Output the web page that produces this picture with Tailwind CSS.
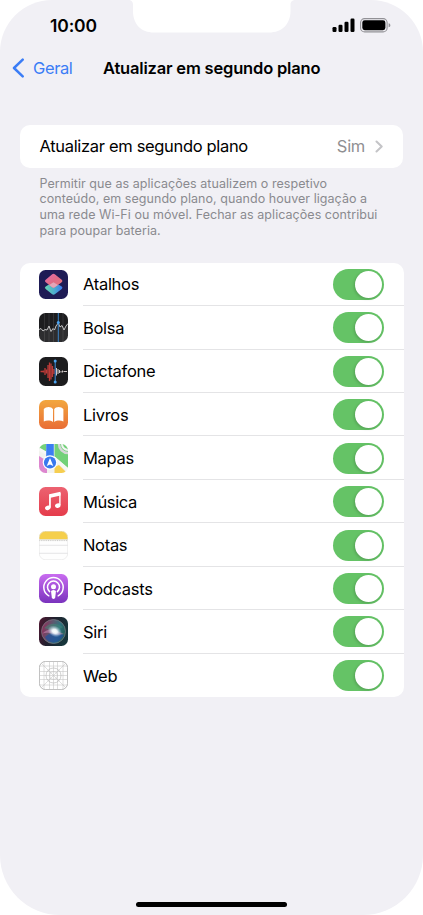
<!DOCTYPE html>
<html lang="pt">
<head>
    <meta charset="UTF-8">
    <meta name="viewport" content="width=device-width, initial-scale=1.0">
    <title>Atualizar em segundo plano</title>
    <script src="https://cdn.jsdelivr.net/npm/@tailwindcss/browser@4"></script>
</head>
<body class="bg-white">
    <div class="relative flex flex-col w-[423px] h-[915px] overflow-hidden rounded-t-[52px] rounded-b-[60px] bg-[#f1f0f5] font-['Inter','Liberation_Sans',sans-serif] text-black">

        <!-- Notch -->
        <svg class="absolute left-[128px] top-0" width="168" height="33" viewBox="0 0 168 33">
            <path d="M0 0C3.500 0 5 1.500 5 5V11C5 24 13 32.500 26 32.500H141C154 32.500 162.500 24 162.500 11V5C162.500 1.500 164 0 168 0Z" fill="#fff"/>
        </svg>

        <!-- Status bar -->
        <div class="flex h-[50px] items-center justify-between pl-[50px] pr-[32px]">
            <span class="pt-[2px] text-[17.500px] font-semibold tracking-[-0.15px]">10:00</span>
            <div class="flex items-center gap-[5px]">
                <svg width="23" height="14" viewBox="0 0 23 14">
                    <rect x="0.500" y="9" width="4" height="5" rx="1.200"/>
                    <rect x="6.500" y="6.700" width="4" height="7.300" rx="1.200"/>
                    <rect x="12.500" y="3.700" width="4" height="10.300" rx="1.200"/>
                    <rect x="18.500" y="0.500" width="4" height="13.500" rx="1.200"/>
                </svg>
                <svg width="31" height="15" viewBox="0 0 31 15">
                    <rect x="0.600" y="0.600" width="26.500" height="13.300" rx="4" fill="none" stroke="#929196" stroke-width="1.100"/>
                    <rect x="2.300" y="2.300" width="23.100" height="9.900" rx="2.400"/>
                    <path d="M28.600 5.200C31 5.900 31 8.600 28.600 9.300Z" fill="#929196"/>
                </svg>
            </div>
        </div>

        <!-- Navigation bar -->
        <div class="flex h-[37px] items-center pl-[12px]">
            <svg class="-mt-px" width="13" height="20" viewBox="0 0 13 20" fill="none" stroke="#3b7df6" stroke-width="2.500" stroke-linecap="round" stroke-linejoin="round"><path d="M10.700 1.700L2 10L10.700 18.300"/></svg>
            <span class="ml-[8px] w-[70px] text-[16.500px] tracking-[-0.4px] text-[#3b7df6]">Geral</span>
            <h1 class="whitespace-nowrap text-[16.500px] font-semibold tracking-[-0.18px]">Atualizar em segundo plano</h1>
        </div>

        <div class="mx-[20px] mt-[37.500px] flex h-[43.500px] items-center rounded-[10px] bg-white pl-[19.500px] pr-[20px]">
            <span class="grow whitespace-nowrap text-[16.500px] tracking-[-0.33px]">Atualizar em segundo plano</span>
            <span class="mr-[10px] text-[16.500px] tracking-[-0.3px] text-[#8f8f92]">Sim</span>
            <svg width="8" height="13" viewBox="0 0 8 13" fill="none" stroke="#c4c4c7" stroke-width="2" stroke-linecap="round" stroke-linejoin="round"><path d="M1.500 1.500L6.700 6.500L1.500 11.500"/></svg>
        </div>
        <p class="ml-[39.500px] mt-[7.500px] whitespace-nowrap text-[12.500px] leading-[15.900px] tracking-[0.05px] text-[#8a8a8f]">Permitir que as aplicações atualizem o respetivo<br>conteúdo, em segundo plano, quando houver ligação a<br>uma rede Wi-Fi ou móvel. Fechar as aplicações contribui<br>para poupar bateria.</p>

        <div class="ml-[20px] mr-[19.500px] mt-[23.500px] flex h-[434.500px] flex-col overflow-hidden rounded-[10px] bg-white text-[16.500px] tracking-[-0.3px]">
            <div class="flex flex-1 items-center pl-[19.400px]">
                <svg class="shrink-0" width="29" height="29" viewBox="0 0 29 29">
                    <defs>
                        <linearGradient id="a1" x1="0" y1="0" x2="1" y2="1"><stop offset="0" stop-color="#e36bb0"/><stop offset=".5" stop-color="#e06b86"/><stop offset="1" stop-color="#e8767a"/></linearGradient>
                        <linearGradient id="a2" x1="0" y1="0" x2="1" y2="0"><stop offset="0" stop-color="#67d4b0"/><stop offset=".5" stop-color="#4fb0cc"/><stop offset="1" stop-color="#3e7af0"/></linearGradient>
                    </defs>
                    <rect width="29" height="29" rx="6.500" fill="#1e1b55"/>
                    <path d="M6.700 16.600L13.400 12.200Q14.500 11.500 15.600 12.200L22.700 16.600Q24.300 17.800 22.700 19L15.800 24.300Q14.500 25.200 13.200 24.300L6.700 19Q5 17.800 6.700 16.600Z" fill="url(#a2)"/>
                    <path d="M6.700 9.700L13.200 4.300Q14.500 3.300 15.800 4.300L22.700 9.700Q24.300 11 22.700 12.300L15.800 17.300Q14.500 18.100 13.200 17.300L6.700 12.300Q5 11 6.700 9.700Z" fill="url(#a1)"/>
                    <path d="M10.200 15.100L14.500 12.300L18.900 15.100L15.800 17.300Q14.500 18.100 13.200 17.300Z" fill="#e4a5b8"/>
                </svg>
                <div class="ml-[14.600px] flex grow items-center justify-between self-stretch border-b border-[#e4e4e6] pr-[19.500px] pt-px">
                    <span class="pt-px">Atalhos</span>
                    <div class="flex h-[31px] w-[51px] items-center justify-end rounded-full bg-[#65c366] pr-[2px]"><div class="size-[27px] rounded-full bg-white shadow-[-1px_1px_3px_rgba(0,0,0,0.18)]"></div></div>
                </div>
            </div>
            <div class="flex flex-1 items-center pl-[19.400px]">
                <svg class="shrink-0" width="29" height="29" viewBox="0 0 29 29">
                    <rect width="29" height="29" rx="6.500" fill="#1c1c1e"/>
                    <path d="M5.500 1V28M10 0V29M14.500 0V29M24 0V29" stroke="#38383a" stroke-width=".8"/>
                    <path d="M0 16.500L2 15.500L4 18L6 16.500L8 17L10 13L12 18.500L14 15.500L15.500 17L17 13L19.300 10L21 14L23 12.500L25 17L27 13L29 10.500V29H0Z" fill="#fff" fill-opacity=".08"/>
                    <path d="M0 16.500L2 15.500L4 18L6 16.500L8 17L10 13L12 18.500L14 15.500L15.500 17L17 13L19.300 10L21 14L23 12.500L25 17L27 13L29 10.500" fill="none" stroke="#d5d5d5" stroke-width=".9"/>
                    <path d="M19.300 0V29" stroke="#3e8fd8" stroke-width=".9"/>
                    <circle cx="19.300" cy="9.500" r="1.500" fill="#4ba3ef"/>
                </svg>
                <div class="ml-[14.600px] flex grow items-center justify-between self-stretch border-b border-[#e4e4e6] pr-[19.500px] pt-px">
                    <span class="pt-px">Bolsa</span>
                    <div class="flex h-[31px] w-[51px] items-center justify-end rounded-full bg-[#65c366] pr-[2px]"><div class="size-[27px] rounded-full bg-white shadow-[-1px_1px_3px_rgba(0,0,0,0.18)]"></div></div>
                </div>
            </div>
            <div class="flex flex-1 items-center pl-[19.400px]">
                <svg class="shrink-0" width="29" height="29" viewBox="0 0 29 29">
                    <rect width="29" height="29" rx="6.500" fill="#1c1c1e"/>
                    <path d="M1.500 14.500H4M4.500 13.500V15.500M6 11V18M7.500 12.500V16.500M9 8V21M10.500 5.500V24M12 6.500V22.500M13.500 9V20M15 12V17" stroke="#bd3b38" stroke-width="1.300"/>
                    <path d="M17.500 11V18.500M19 12V17M20.500 13V16M22 14V15.500M23.500 13.500V15.500M24.500 14.500H28" stroke="#d0c8c8" stroke-width="1"/>
                    <path d="M16.200 4V25" stroke="#3f8fe0" stroke-width="1"/>
                    <circle cx="16.200" cy="4" r="1.500" fill="#4ba3ef"/>
                    <circle cx="16.200" cy="25" r="1.500" fill="#4ba3ef"/>
                </svg>
                <div class="ml-[14.600px] flex grow items-center justify-between self-stretch border-b border-[#e4e4e6] pr-[19.500px] pt-px">
                    <span class="pt-px">Dictafone</span>
                    <div class="flex h-[31px] w-[51px] items-center justify-end rounded-full bg-[#65c366] pr-[2px]"><div class="size-[27px] rounded-full bg-white shadow-[-1px_1px_3px_rgba(0,0,0,0.18)]"></div></div>
                </div>
            </div>
            <div class="flex flex-1 items-center pl-[19.400px]">
                <svg class="shrink-0" width="29" height="29" viewBox="0 0 29 29">
                    <defs><linearGradient id="l1" x1="0" y1="0" x2="0" y2="1"><stop offset="0" stop-color="#f2a73f"/><stop offset="1" stop-color="#e96d35"/></linearGradient></defs>
                    <rect width="29" height="29" rx="6.500" fill="url(#l1)"/>
                    <path d="M14 9.300C12.500 6.200 7 6.300 4.800 9V21.600C7.200 20.200 11.500 20.200 14 22Z" fill="#fff"/>
                    <path d="M15.200 9.300C16.700 6.200 22.200 6.300 24.400 9V21.600C22 20.200 17.700 20.200 15.200 22Z" fill="#fff"/>
                </svg>
                <div class="ml-[14.600px] flex grow items-center justify-between self-stretch border-b border-[#e4e4e6] pr-[19.500px] pt-px">
                    <span class="pt-px">Livros</span>
                    <div class="flex h-[31px] w-[51px] items-center justify-end rounded-full bg-[#65c366] pr-[2px]"><div class="size-[27px] rounded-full bg-white shadow-[-1px_1px_3px_rgba(0,0,0,0.18)]"></div></div>
                </div>
            </div>
            <div class="flex flex-1 items-center pl-[19.400px]">
                <svg class="shrink-0" width="29" height="29" viewBox="0 0 29 29">
                    <defs><clipPath id="m1"><rect width="29" height="29" rx="6.500"/></clipPath></defs>
                    <g clip-path="url(#m1)">
                        <rect width="29" height="29" fill="#f2f2ee"/>
                        <path d="M0 0H7V8L0 4Z" fill="#74d27b"/>
                        <path d="M15.500 0H29V24L15.500 12.500Z" fill="#72d179"/>
                        <path d="M0 12L8 17V29H0Z" fill="#dd86cf"/>
                        <path d="M15.500 23L20 21L28 29H15.500Z" fill="#f6ce50"/>
                        <path d="M0 5L8 9.500M15 14L29 26" stroke="#f7f7f5" stroke-width="3"/>
                        <circle cx="29" cy="0" r="9" fill="none" stroke="#d5d7d8" stroke-width="2.500"/>
                        <circle cx="29" cy="0" r="6" fill="none" stroke="#f4f4f4" stroke-width="2"/>
                        <rect x="7.200" width="7.600" height="13" fill="#3b7ef2"/>
                        <circle cx="11" cy="18.500" r="7.300" fill="#fff"/>
                        <circle cx="11" cy="18.500" r="6.100" fill="#3978ee"/>
                        <path d="M11 14L14.300 22L11 20.400L7.700 22Z" fill="#fff"/>
                    </g>
                </svg>
                <div class="ml-[14.600px] flex grow items-center justify-between self-stretch border-b border-[#e4e4e6] pr-[19.500px] pt-px">
                    <span class="pt-px">Mapas</span>
                    <div class="flex h-[31px] w-[51px] items-center justify-end rounded-full bg-[#65c366] pr-[2px]"><div class="size-[27px] rounded-full bg-white shadow-[-1px_1px_3px_rgba(0,0,0,0.18)]"></div></div>
                </div>
            </div>
            <div class="flex flex-1 items-center pl-[19.400px]">
                <svg class="shrink-0" width="29" height="29" viewBox="0 0 29 29">
                    <defs><linearGradient id="u1" x1="0" y1="0" x2="0" y2="1"><stop offset="0" stop-color="#ec6271"/><stop offset="1" stop-color="#e53c4b"/></linearGradient></defs>
                    <rect width="29" height="29" rx="6.500" fill="url(#u1)"/>
                    <path d="M10.300 7.200L21.500 4.700V8.500L11.600 10.700V20.500H10.300Z" fill="#fff"/>
                    <path d="M10.900 7.500V20.500M20.900 6V18" stroke="#fff" stroke-width="1.400"/>
                    <ellipse cx="8.800" cy="20.800" rx="2.800" ry="2.200" fill="#fff" transform="rotate(-18 8.800 20.800)"/>
                    <ellipse cx="18.800" cy="18.600" rx="2.800" ry="2.200" fill="#fff" transform="rotate(-18 18.800 18.600)"/>
                </svg>
                <div class="ml-[14.600px] flex grow items-center justify-between self-stretch border-b border-[#e4e4e6] pr-[19.500px] pt-px">
                    <span class="pt-px tracking-[-0.4px]">Música</span>
                    <div class="flex h-[31px] w-[51px] items-center justify-end rounded-full bg-[#65c366] pr-[2px]"><div class="size-[27px] rounded-full bg-white shadow-[-1px_1px_3px_rgba(0,0,0,0.18)]"></div></div>
                </div>
            </div>
            <div class="flex flex-1 items-center pl-[19.400px]">
                <svg class="shrink-0" width="29" height="29" viewBox="0 0 29 29">
                    <defs><clipPath id="n1"><rect width="29" height="29" rx="6.500"/></clipPath></defs>
                    <g clip-path="url(#n1)">
                        <rect width="29" height="29" fill="#fefefe"/>
                        <rect width="29" height="8.200" fill="#f5cf4c"/>
                        <path d="M0 8.700H29" stroke="#d8d2bd" stroke-width=".7"/>
                        <path d="M0 9.600H29" stroke="#bcbcbc" stroke-width=".8" stroke-dasharray="1 .8"/>
                        <path d="M0 14.300H29M0 22.300H29" stroke="#dededf" stroke-width=".8"/>
                    </g>
                    <rect x=".3" y=".3" width="28.400" height="28.400" rx="6.200" fill="none" stroke="#e4e4e4" stroke-width=".6"/>
                </svg>
                <div class="ml-[14.600px] flex grow items-center justify-between self-stretch border-b border-[#e4e4e6] pr-[19.500px] pt-px">
                    <span class="pt-px">Notas</span>
                    <div class="flex h-[31px] w-[51px] items-center justify-end rounded-full bg-[#65c366] pr-[2px]"><div class="size-[27px] rounded-full bg-white shadow-[-1px_1px_3px_rgba(0,0,0,0.18)]"></div></div>
                </div>
            </div>
            <div class="flex flex-1 items-center pl-[19.400px]">
                <svg class="shrink-0" width="29" height="29" viewBox="0 0 29 29">
                    <defs><linearGradient id="p1" x1="0" y1="0" x2="0" y2="1"><stop offset="0" stop-color="#c96cf0"/><stop offset="1" stop-color="#7a33bd"/></linearGradient></defs>
                    <rect width="29" height="29" rx="6.500" fill="url(#p1)"/>
                    <path d="M9.800 21.800A9.700 9.700 0 1 1 19.200 21.800M10.600 17.600A6 6 0 1 1 18.400 17.600" fill="none" stroke="#fff" stroke-width="1.500" stroke-linecap="round"/>
                    <circle cx="14.500" cy="12.700" r="2.500" fill="#fff"/>
                    <path d="M12.100 17.600Q12.100 16.100 14.500 16.100Q16.900 16.100 16.900 17.600L16.200 23.600Q16 25 14.500 25Q13 25 12.800 23.600Z" fill="#fff"/>
                </svg>
                <div class="ml-[14.600px] flex grow items-center justify-between self-stretch border-b border-[#e4e4e6] pr-[19.500px] pt-px">
                    <span class="pt-px">Podcasts</span>
                    <div class="flex h-[31px] w-[51px] items-center justify-end rounded-full bg-[#65c366] pr-[2px]"><div class="size-[27px] rounded-full bg-white shadow-[-1px_1px_3px_rgba(0,0,0,0.18)]"></div></div>
                </div>
            </div>
            <div class="flex flex-1 items-center pl-[19.400px]">
                <svg class="shrink-0" width="29" height="29" viewBox="0 0 29 29">
                    <defs>
                        <linearGradient id="s1" x1="0" y1="0" x2="1" y2=".3"><stop offset="0" stop-color="#511832"/><stop offset=".5" stop-color="#20202e"/><stop offset="1" stop-color="#17353b"/></linearGradient>
                        <linearGradient id="s2" x1="0" y1=".3" x2="1" y2=".6"><stop offset="0" stop-color="#8f2c58"/><stop offset=".4" stop-color="#5c5a70"/><stop offset=".7" stop-color="#2f7480"/><stop offset="1" stop-color="#235c52"/></linearGradient>
                        <radialGradient id="s3"><stop offset="0" stop-color="#fff"/><stop offset=".35" stop-color="#f2fafc" stop-opacity=".95"/><stop offset="1" stop-color="#b5cbe8" stop-opacity="0"/></radialGradient>
                    </defs>
                    <rect width="29" height="29" rx="6.500" fill="url(#s1)"/>
                    <circle cx="14.500" cy="14.500" r="12" fill="url(#s2)" stroke="#7c8087" stroke-width=".7"/>
                    <path d="M5 11Q14 3 24 10Q18 14 15 14Z" fill="#3f8c78" fill-opacity=".5"/>
                    <path d="M6 20Q13 13 25 18Q20 26 14.500 25.500Q8 25 6 20Z" fill="#24509c" fill-opacity=".75"/>
                    <path d="M3.500 16.500Q9 11 15 13L25 17Q19 18.500 14 17Q9 15 3.500 16.500Z" fill="#d98fbd" fill-opacity=".5"/>
                    <ellipse cx="15.800" cy="14.300" rx="7.500" ry="5.500" fill="url(#s3)" transform="rotate(25 15.800 14.300)"/>
                </svg>
                <div class="ml-[14.600px] flex grow items-center justify-between self-stretch border-b border-[#e4e4e6] pr-[19.500px] pt-px">
                    <span class="pt-px">Siri</span>
                    <div class="flex h-[31px] w-[51px] items-center justify-end rounded-full bg-[#65c366] pr-[2px]"><div class="size-[27px] rounded-full bg-white shadow-[-1px_1px_3px_rgba(0,0,0,0.18)]"></div></div>
                </div>
            </div>
            <div class="flex flex-1 items-center pl-[19.400px]">
                <svg class="shrink-0" width="29" height="29" viewBox="0 0 29 29" fill="none" stroke="#c2c2c2" stroke-width=".55">
                    <rect x=".4" y=".4" width="28.200" height="28.200" rx="6.300" fill="#fff" stroke="#aaa" stroke-width=".8"/>
                    <path d="M2 2L27 27M27 2L2 27M14.500 0V29M0 14.500H29M5 0V29M10.500 0V29M18.500 0V29M24 0V29M0 5H29M0 10.500H29M0 18.500H29M0 24H29"/>
                    <circle cx="14.500" cy="14.500" r="7.500" stroke="#aaa"/>
                    <circle cx="14.500" cy="14.500" r="4"/>
                </svg>
                <div class="ml-[14.600px] flex grow items-center justify-between self-stretch border-b border-transparent pr-[19.500px] pt-px">
                    <span class="pt-px">Web</span>
                    <div class="flex h-[31px] w-[51px] items-center justify-end rounded-full bg-[#65c366] pr-[2px]"><div class="size-[27px] rounded-full bg-white shadow-[-1px_1px_3px_rgba(0,0,0,0.18)]"></div></div>
                </div>
            </div>
        </div>

        <!-- Home indicator -->
        <div class="mx-auto mb-[8px] mt-auto h-[5px] w-[151px] rounded-full bg-black"></div>
    </div>
</body>
</html>
